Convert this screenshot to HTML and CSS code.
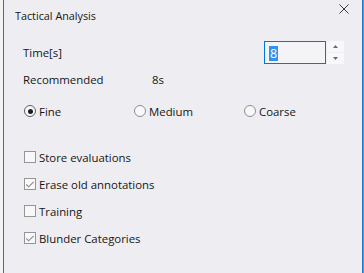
FILE: index.html
```html
<!DOCTYPE html>
<html>
<head>
<meta charset="utf-8">
<link rel="stylesheet" href="styles.css">
</head>
<body>
<div class="screen">
  <div class="bg-left"></div>
  <div class="dialog">
    <div class="titlebar">
      <span class="title">Tactical Analysis</span>
      <svg class="close" width="10" height="10" viewBox="0 0 10 10"><path d="M0.5 0.5 L9.5 9.5 M9.5 0.5 L0.5 9.5" stroke="#3a3a3a" stroke-width="1" fill="none"/></svg>
    </div>
    <div class="content">
      <div class="time-row">
        <span>Time[s]</span>
        <div class="spin">
          <div class="spin-input"><span class="sel">8</span></div>
          <div class="spin-btns">
            <div class="spin-btn"><svg width="5" height="3" viewBox="0 0 5 3"><path d="M0 3 L2.5 0 L5 3 Z" fill="#6b6b6b"/></svg></div>
            <div class="spin-btn"><svg width="5" height="3" viewBox="0 0 5 3"><path d="M0 0 L2.5 3 L5 0 Z" fill="#6b6b6b"/></svg></div>
          </div>
        </div>
      </div>
      <div class="rec-row">
        <span class="rec-label">Recommended</span>
        <span>8s</span>
      </div>
      <div class="radio-row">
        <label class="radio"><span class="dot checked"></span>Fine</label>
        <label class="radio"><span class="dot"></span>Medium</label>
        <label class="radio"><span class="dot"></span>Coarse</label>
      </div>
      <div class="checks">
        <label class="check"><span class="box"></span>Store evaluations</label>
        <label class="check"><span class="box"><svg width="11" height="11" viewBox="0 0 11 11"><path d="M1.5 5.5 L4 8 L9.5 2.5" stroke="#8a8a8a" stroke-width="1.2" fill="none"/></svg></span>Erase old annotations</label>
        <label class="check"><span class="box"></span>Training</label>
        <label class="check"><span class="box"><svg width="11" height="11" viewBox="0 0 11 11"><path d="M1.5 5.5 L4 8 L9.5 2.5" stroke="#8a8a8a" stroke-width="1.2" fill="none"/></svg></span>Blunder Categories</label>
      </div>
    </div>
  </div>
  <div class="bg-right"></div>
</div>
</body>
</html>
```
FILE: styles.css
```css
html, body {
  margin: 0;
  padding: 0;
}
body {
  width: 364px;
  height: 273px;
  overflow: hidden;
  font-family: "Open Sans", "Noto Sans", sans-serif;
  font-size: 11.4px;
  color: #151515;
}
.screen {
  display: flex;
  height: 273px;
}
.bg-left {
  width: 3px;
  background: #f3f3f3;
}
.bg-right {
  width: 1px;
  background: #5c9ad6;
}
.dialog {
  width: 358px;
  height: 273px;
  background: #eeeef2;
  border-left: 1px solid #1f76c9;
  border-right: 1px solid #1f76c9;
  display: flex;
  flex-direction: column;
}
.titlebar {
  height: 31px;
  display: flex;
  align-items: center;
  justify-content: space-between;
  padding: 0 13px 0 11px;
}
.title {
  font-size: 10.8px;
}
.close {
  align-self: flex-start;
  margin-top: 4px;
}
.content {
  padding: 0 18px 0 19px;
  display: flex;
  flex-direction: column;
}
.time-row {
  margin-top: 10px;
  height: 23px;
  display: flex;
  align-items: center;
  justify-content: space-between;
}
.spin {
  display: flex;
  height: 23px;
  gap: 1px;
}
.spin-input {
  box-sizing: border-box;
  width: 62px;
  height: 23px;
  border: 1px solid #0078d7;
  background: #f4f4f7;
  padding: 1px 0 0 4px;
  display: flex;
  align-items: center;
}
.sel {
  background: #3392f0;
  color: #fff;
  line-height: 15px;
  padding: 0 1px;
  font-size: 12.5px;
}
.spin-btns {
  display: flex;
  flex-direction: column;
  gap: 1px;
  width: 17px;
}
.spin-btn {
  height: 11px;
  background: #f8f8fa;
  display: flex;
  align-items: center;
  justify-content: center;
}
.rec-row {
  margin-top: 7px;
  height: 16px;
  display: flex;
  align-items: center;
}
.rec-label {
  width: 129px;
}
.radio-row {
  margin-top: 16px;
  height: 16px;
  display: flex;
  align-items: center;
}
.radio {
  flex: 0 0 110px;
  display: flex;
  align-items: center;
}
.dot {
  box-sizing: border-box;
  width: 12px;
  height: 12px;
  border-radius: 50%;
  border: 1px solid #8f8f8f;
  background: #f8f8f8;
  margin: 0 3px 0 1px;
  display: flex;
  align-items: center;
  justify-content: center;
}
.dot.checked {
  border-color: #606060;
}
.dot.checked::after {
  content: "";
  width: 5px;
  height: 5px;
  border-radius: 50%;
  background: #1e1e1e;
}
.checks {
  margin-top: 30px;
  display: flex;
  flex-direction: column;
  gap: 11px;
}
.check {
  height: 16px;
  display: flex;
  align-items: center;
}
.box {
  box-sizing: border-box;
  width: 12px;
  height: 12px;
  border: 1px solid #959595;
  background: #f8f8f9;
  margin: 0 3px 0 1px;
  display: flex;
  align-items: center;
  justify-content: center;
}
.box svg {
  display: block;
}
```
